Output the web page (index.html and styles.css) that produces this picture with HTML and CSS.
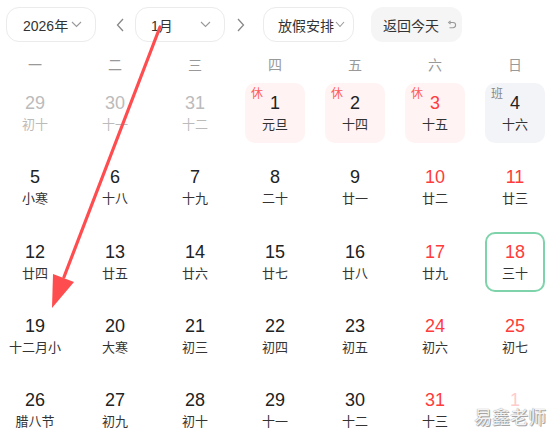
FILE: index.html
```html
<!DOCTYPE html>
<html lang="zh">
<head>
<meta charset="utf-8">
<title>日历</title>
<link rel="stylesheet" href="styles.css">
</head>
<body>
<div class="page">
  <div class="toolbar">
    <div class="select year">
      <span>2026年</span>
      <svg class="chev" width="11" height="7" viewBox="0 0 11 7"><path d="M1 1l4.5 4.5L10 1" fill="none" stroke="#999" stroke-width="1.1"/></svg>
    </div>
    <div class="nav prev"><svg width="9" height="14" viewBox="0 0 9 14"><path d="M7 1L1.5 7 7 13" fill="none" stroke="#888" stroke-width="1.3"/></svg></div>
    <div class="select month">
      <span>1月</span>
      <svg class="chev" width="11" height="7" viewBox="0 0 11 7"><path d="M1 1l4.5 4.5L10 1" fill="none" stroke="#999" stroke-width="1.1"/></svg>
    </div>
    <div class="nav next"><svg width="9" height="14" viewBox="0 0 9 14"><path d="M2 1l5.5 6L2 13" fill="none" stroke="#888" stroke-width="1.3"/></svg></div>
    <div class="select holiday">
      <span>放假安排</span>
      <svg class="chev" width="10" height="7" viewBox="0 0 10 7"><path d="M1 1l4 4.5L9 1" fill="none" stroke="#999" stroke-width="1.1"/></svg>
    </div>
    <div class="today-btn">
      <span>返回今天</span>
      <svg width="10" height="10" viewBox="0 0 10 10"><path d="M3 2.5h3a2.6 2.6 0 0 1 0 5.2H2.5" fill="none" stroke="#999" stroke-width="1.1"/><path d="M3.6 0.8L1.6 2.5l2 1.7" fill="none" stroke="#999" stroke-width="1.1"/></svg>
    </div>
  </div>

  <div class="weekdays">
    <div>一</div><div>二</div><div>三</div><div>四</div><div>五</div><div>六</div><div>日</div>
  </div>

  <div class="grid">
    <div class="cell"><div class="day other"><div class="num">29</div><div class="lunar">初十</div></div></div>
    <div class="cell"><div class="day other"><div class="num">30</div><div class="lunar">十一</div></div></div>
    <div class="cell"><div class="day other"><div class="num">31</div><div class="lunar">十二</div></div></div>
    <div class="cell"><div class="day rest"><span class="tag">休</span><div class="num">1</div><div class="lunar">元旦</div></div></div>
    <div class="cell"><div class="day rest"><span class="tag">休</span><div class="num">2</div><div class="lunar">十四</div></div></div>
    <div class="cell"><div class="day rest weekend"><span class="tag">休</span><div class="num">3</div><div class="lunar">十五</div></div></div>
    <div class="cell"><div class="day work"><span class="tag">班</span><div class="num">4</div><div class="lunar">十六</div></div></div>

    <div class="cell"><div class="day"><div class="num">5</div><div class="lunar">小寒</div></div></div>
    <div class="cell"><div class="day"><div class="num">6</div><div class="lunar">十八</div></div></div>
    <div class="cell"><div class="day"><div class="num">7</div><div class="lunar">十九</div></div></div>
    <div class="cell"><div class="day"><div class="num">8</div><div class="lunar">二十</div></div></div>
    <div class="cell"><div class="day"><div class="num">9</div><div class="lunar">廿一</div></div></div>
    <div class="cell"><div class="day weekend"><div class="num">10</div><div class="lunar">廿二</div></div></div>
    <div class="cell"><div class="day weekend"><div class="num">11</div><div class="lunar">廿三</div></div></div>

    <div class="cell"><div class="day"><div class="num">12</div><div class="lunar">廿四</div></div></div>
    <div class="cell"><div class="day"><div class="num">13</div><div class="lunar">廿五</div></div></div>
    <div class="cell"><div class="day"><div class="num">14</div><div class="lunar">廿六</div></div></div>
    <div class="cell"><div class="day"><div class="num">15</div><div class="lunar">廿七</div></div></div>
    <div class="cell"><div class="day"><div class="num">16</div><div class="lunar">廿八</div></div></div>
    <div class="cell"><div class="day weekend"><div class="num">17</div><div class="lunar">廿九</div></div></div>
    <div class="cell"><div class="day weekend today"><div class="num">18</div><div class="lunar">三十</div></div></div>

    <div class="cell"><div class="day"><div class="num">19</div><div class="lunar">十二月小</div></div></div>
    <div class="cell"><div class="day"><div class="num">20</div><div class="lunar">大寒</div></div></div>
    <div class="cell"><div class="day"><div class="num">21</div><div class="lunar">初三</div></div></div>
    <div class="cell"><div class="day"><div class="num">22</div><div class="lunar">初四</div></div></div>
    <div class="cell"><div class="day"><div class="num">23</div><div class="lunar">初五</div></div></div>
    <div class="cell"><div class="day weekend"><div class="num">24</div><div class="lunar">初六</div></div></div>
    <div class="cell"><div class="day weekend"><div class="num">25</div><div class="lunar">初七</div></div></div>

    <div class="cell"><div class="day"><div class="num">26</div><div class="lunar">腊八节</div></div></div>
    <div class="cell"><div class="day"><div class="num">27</div><div class="lunar">初九</div></div></div>
    <div class="cell"><div class="day"><div class="num">28</div><div class="lunar">初十</div></div></div>
    <div class="cell"><div class="day"><div class="num">29</div><div class="lunar">十一</div></div></div>
    <div class="cell"><div class="day"><div class="num">30</div><div class="lunar">十二</div></div></div>
    <div class="cell"><div class="day weekend"><div class="num">31</div><div class="lunar">十三</div></div></div>
    <div class="cell"><div class="day next-month"><div class="num">1</div></div></div>
  </div>

  <svg class="arrow" width="554" height="438" viewBox="0 0 554 438">
    <line x1="160" y1="27" x2="64" y2="277" stroke="#ff4d4f" stroke-width="3.2" stroke-linecap="round"/>
    <polygon points="52,308 74,282 53,274" fill="#ff4d4f"/>
  </svg>

  <div class="watermark">易鑫老师</div>
</div>
</body>
</html>
```

FILE: styles.css
```css
* { box-sizing: border-box; }

html, body {
  margin: 0;
  padding: 0;
  background: #fff;
}

body {
  font-family: "Liberation Sans", "Noto Sans CJK SC", sans-serif;
  color: #222;
  overflow: hidden;
}

.page {
  position: relative;
  width: 554px;
  height: 438px;
  overflow: hidden;
}

.toolbar {
  display: flex;
  align-items: center;
  padding: 7px 0 0 6px;
  height: 42px;
}

.select {
  display: flex;
  align-items: center;
  justify-content: space-between;
  height: 35px;
  border: 1px solid #ebebeb;
  border-radius: 13px;
  font-size: 14px;
  color: #333;
  padding: 0 13px 0 16px;
  white-space: nowrap;
}

.year { width: 90px; }
.month { width: 90px; padding-left: 15px; margin-left: 3px; }
.holiday { width: 91px; margin-left: 11px; padding: 0 8px 0 14px; }

.nav {
  width: 24px;
  height: 35px;
  display: flex;
  align-items: center;
  justify-content: center;
}
.prev { margin-left: 12px; }
.next { margin-left: 3px; }

.today-btn {
  display: flex;
  align-items: center;
  gap: 8px;
  height: 35px;
  width: 91px;
  margin-left: 17px;
  padding-left: 12px;
  background: #f5f5f5;
  border-radius: 12px;
  font-size: 14px;
  color: #333;
  white-space: nowrap;
}

.weekdays {
  display: grid;
  grid-template-columns: repeat(7, 80px);
  margin: 13px 0 0 -5px;
  height: 20px;
  line-height: 20px;
  font-size: 14px;
  color: #999;
  text-align: center;
}

.grid {
  display: grid;
  grid-template-columns: repeat(7, 80px);
  grid-auto-rows: 74.3px;
  margin: 1px 0 0 -5px;
}

.cell {
  display: flex;
  justify-content: center;
  padding-top: 7px;
}

.day {
  position: relative;
  width: 60px;
  height: 60px;
  border-radius: 10px;
  text-align: center;
  padding-top: 8px;
}

.num {
  font-size: 18px;
  line-height: 24px;
  color: #222;
}

.lunar {
  font-size: 13px;
  line-height: 20px;
  height: 20px;
  color: #333;
  white-space: nowrap;
}

.weekend .num { color: #ff3b3b; }

.other .num,
.other .lunar { color: #bbb; }

.next-month { padding-top: 12px; }
.next-month .num { color: #fcc; line-height: 16px; }

.rest { background: #fff3f3; }
.work { background: #f2f4f7; }
.work .num { color: #222; }

.tag {
  position: absolute;
  left: 6px;
  top: 4px;
  font-size: 12px;
  line-height: 14px;
  color: #ff5a5a;
}
.work .tag { color: #888; }

.today {
  border: 2px solid #7fd3aa;
  padding-top: 6px;
}

.arrow {
  position: absolute;
  left: 0;
  top: 0;
  pointer-events: none;
}

.watermark {
  position: absolute;
  left: 474px;
  top: 409px;
  font-size: 18px;
  line-height: 18px;
  white-space: nowrap;
  color: #f4f4f4;
  text-shadow: 0 0 1px #777, 1px 1px 0 #aaa;
}
```
